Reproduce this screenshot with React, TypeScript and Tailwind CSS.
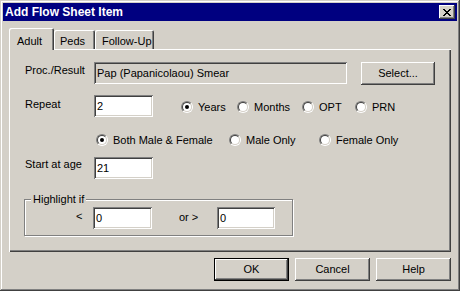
import React from 'react'

const raised =
  'shadow-[inset_-1px_-1px_#404040,inset_1px_1px_#ffffff,inset_-2px_-2px_#808080,inset_2px_2px_#d4d0c8]'
const sunken =
  'shadow-[inset_1px_1px_#808080,inset_-1px_-1px_#ffffff,inset_2px_2px_#404040,inset_-2px_-2px_#d4d0c8]'

function Radio({ label, checked = false, width }: { label: string; checked?: boolean; width?: string }) {
  return (
    <div className={`flex items-center ${width ?? ''}`}>
      <div className="w-[12px] h-[12px] rounded-full border border-t-[#808080] border-l-[#808080] border-r-white border-b-white shrink-0">
        <div className="w-full h-full rounded-full border border-t-[#404040] border-l-[#404040] border-r-[#d4d0c8] border-b-[#d4d0c8] bg-white flex items-center justify-center">
          {checked && <div className="w-[4px] h-[4px] rounded-full bg-black" />}
        </div>
      </div>
      <span className="ml-[5px] leading-[13px]">{label}</span>
    </div>
  )
}

function TextBox({ value, width, readOnly = false }: { value: string; width: string; readOnly?: boolean }) {
  return (
    <div className={`${width} h-[22px] ${sunken} ${readOnly ? 'bg-[#d4d0c8]' : 'bg-white'} flex items-center pl-[3px] shrink-0`}>
      <span className="leading-[13px]">{value}</span>
    </div>
  )
}

function Button({ children, isDefault = false, width = 'w-[75px]' }: { children: React.ReactNode; isDefault?: boolean; width?: string }) {
  if (isDefault) {
    return (
      <div className={`${width} h-[23px] border border-black`}>
        <div className={`w-full h-full ${raised} flex items-center justify-center`}>{children}</div>
      </div>
    )
  }
  return <div className={`${width} h-[23px] ${raised} flex items-center justify-center`}>{children}</div>
}

export default function App() {
  return (
    <div className="w-[460px] h-[291px] bg-[#d4d0c8] p-[3px] flex flex-col text-[11px] text-black font-['Liberation_Sans',Arial,sans-serif] shadow-[inset_-1px_-1px_#404040,inset_1px_1px_#d4d0c8,inset_-2px_-2px_#808080,inset_2px_2px_#ffffff]">
      {/* Title bar */}
      <div className="h-[18px] bg-[#000080] flex items-center justify-between pl-[2px] pr-[2px]">
        <span className="text-white font-bold text-[12px] leading-[14px]">Add Flow Sheet Item</span>
        <div className={`w-[16px] h-[14px] ${raised} bg-[#d4d0c8] flex items-center justify-center`}>
          <svg width="8" height="7" viewBox="0 0 8 7" shapeRendering="crispEdges">
            <path
              fill="#000"
              d="M0 0h2v1H0zM6 0h2v1H6zM1 1h2v1H1zM5 1h2v1H5zM2 2h4v1H2zM3 3h2v1H3zM2 4h4v1H2zM1 5h2v1H1zM5 5h2v1H5zM0 6h2v1H0zM6 6h2v1H6z"
            />
          </svg>
        </div>
      </div>

      <div className="px-[6px] pt-[7px] flex flex-col">
        {/* Tabs */}
        <div className="flex items-end h-[21px]">
          <div className="w-[45px] h-[22px] -mb-[1px] relative z-10 bg-[#d4d0c8] rounded-t-[2px] shadow-[inset_1px_1px_#ffffff,inset_-1px_0_#404040,inset_-2px_0_#808080] pl-[8px] pt-[5px]">
            <span className="leading-[13px]">Adult</span>
          </div>
          <div className="w-[41px] h-[19px] rounded-t-[2px] shadow-[inset_1px_1px_#ffffff,inset_-1px_0_#404040,inset_-2px_0_#808080] pl-[6px] pt-[3px]">
            <span className="leading-[13px]">Peds</span>
          </div>
          <div className="w-[59px] h-[19px] rounded-t-[2px] shadow-[inset_1px_1px_#ffffff,inset_-1px_0_#404040,inset_-2px_0_#808080] pl-[7px] pt-[3px]">
            <span className="leading-[13px]">Follow-Up</span>
          </div>
        </div>

        {/* Tab panel */}
        <div className="h-[203px] shadow-[inset_1px_1px_#ffffff,inset_-1px_-1px_#404040,inset_-2px_-2px_#808080] pl-[16px] pt-[13px] flex flex-col">
          <div className="flex items-start h-[22px]">
            <span className="w-[69px] pt-[2px] leading-[13px]">Proc./Result</span>
            <TextBox value="Pap (Papanicolaou) Smear" width="w-[253px]" readOnly />
            <div className="ml-[14px]">
              <Button width="w-[74px]">Select...</Button>
            </div>
          </div>

          <div className="flex items-start h-[22px] mt-[11px]">
            <span className="w-[69px] pt-[3px] leading-[13px]">Repeat</span>
            <TextBox value="2" width="w-[59px]" />
            <div className="flex items-center h-[22px] ml-[28px] pt-[2px]">
              <Radio label="Years" checked width="w-[56px]" />
              <Radio label="Months" width="w-[65px]" />
              <Radio label="OPT" width="w-[53px]" />
              <Radio label="PRN" />
            </div>
          </div>

          <div className="flex items-center h-[22px] mt-[12px] pl-[71px]">
            <Radio label="Both Male & Female" checked width="w-[133px]" />
            <Radio label="Male Only" width="w-[90px]" />
            <Radio label="Female Only" />
          </div>

          <div className="flex items-start h-[22px] mt-[6px]">
            <span className="w-[69px] pt-[1px] leading-[13px]">Start at age</span>
            <TextBox value="21" width="w-[59px]" />
          </div>

          {/* Highlight group */}
          <div className="relative w-[269px] h-[37px] -ml-[1px] mt-[20px] border border-[#808080] shadow-[inset_1px_1px_#ffffff,1px_1px_#ffffff] flex items-start pt-[7px]">
            <span className="absolute -top-[7px] left-[6px] px-[2px] bg-[#d4d0c8] leading-[13px]">Highlight if</span>
            <span className="ml-[51px] w-[17px] pt-[3px] leading-[13px]">&lt;</span>
            <TextBox value="0" width="w-[59px]" />
            <span className="ml-[27px] w-[38px] pt-[4px] leading-[13px]">or &gt;</span>
            <TextBox value="0" width="w-[58px]" />
          </div>
        </div>

        {/* Dialog buttons */}
        <div className="flex justify-end gap-[6px] mt-[6px]">
          <Button isDefault>OK</Button>
          <Button>Cancel</Button>
          <Button>Help</Button>
        </div>
      </div>
    </div>
  )
}
